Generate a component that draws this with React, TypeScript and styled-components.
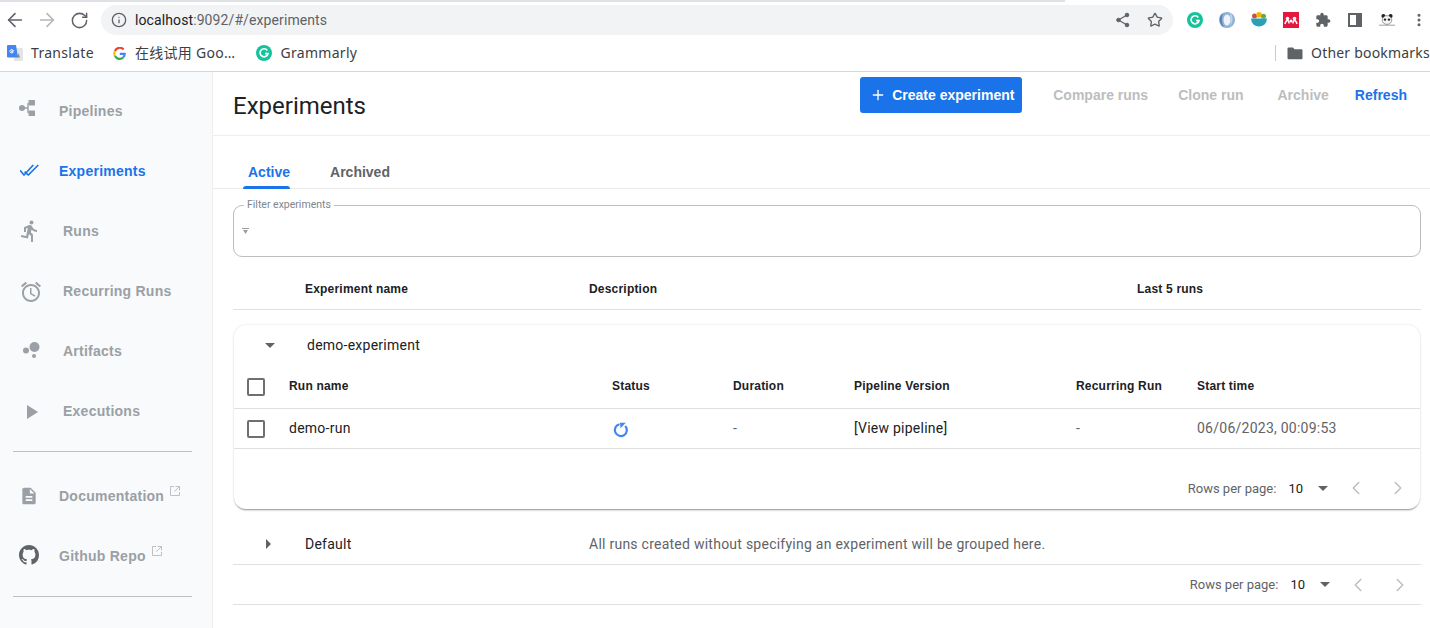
import React from "react";
import styled, { createGlobalStyle } from "styled-components";
import {
  ArrowLeft,
  ArrowRight,
  RotateCw,
  Info,
  Star,
  MoreVertical,
  Plus,
  ChevronLeft,
  ChevronRight,
} from "lucide-react";

const BLUE = "#1a73e8";
const LINE = "#e0e0e0";
const BOLD_FONT = `"Liberation Sans", Arial, sans-serif`;

const GlobalStyle = createGlobalStyle`
  html, body {
    margin: 0;
    padding: 0;
    background: #fff;
    overflow: hidden;
  }
  * { box-sizing: border-box; }
  #root {
    width: 1430px;
    height: 628px;
    font-family: Roboto, "Noto Sans CJK SC", sans-serif;
  }
`;

const Page = styled.div`
  display: flex;
  flex-direction: column;
  width: 1430px;
  height: 628px;
  overflow: hidden;
`;

/* browser chrome */
const Chrome = styled.div`
  height: 72px;
  flex: none;
  background: #fff;
  border-bottom: 1px solid #d6d6d6;
  color: #5f6368;
`;

const TabEdge = styled.div`
  width: 1065px;
  height: 2px;
  background: #dee1e6;
`;

const ToolRow = styled.div`
  display: flex;
  align-items: center;
  height: 36px;
  padding-left: 4px;
`;

const NavIcon = styled.span<{ $dim?: boolean }>`
  display: flex;
  align-items: center;
  justify-content: center;
  width: 22px;
  margin-right: 10px;
  color: ${({ $dim }) => ($dim ? "#b4b6b9" : "#5f6368")};
`;

const Omnibox = styled.div`
  display: flex;
  align-items: center;
  width: 1072px;
  height: 30px;
  margin-left: 1px;
  padding: 0 10px;
  border-radius: 15px;
  background: #f1f3f4;
  font-size: 14px;
  letter-spacing: 0.1px;
  color: #5f6368;
`;

const Url = styled.span`
  margin-left: 8px;
  flex: 1;
  strong {
    font-weight: 400;
    color: #202124;
  }
`;

const OmniAction = styled.span`
  display: flex;
  margin-left: 16px;
  color: #5f6368;
`;

const Extensions = styled.div`
  display: flex;
  align-items: center;
  gap: 16px;
  margin-left: 14px;
`;

const ExtSlot = styled.span`
  display: flex;
  justify-content: center;
  width: 16px;
  height: 16px;
  color: #5f6368;
`;

const BookmarkRow = styled.div`
  display: flex;
  align-items: center;
  height: 30px;
  padding-left: 7px;
  font-family: "Noto Sans", "Noto Sans CJK SC", sans-serif;
  font-size: 14px;
  letter-spacing: 0.3px;
  color: #3c4043;
`;

const Bookmark = styled.span<{ $after: number }>`
  display: flex;
  align-items: center;
  gap: 8px;
  margin-right: ${({ $after }) => $after}px;
  white-space: nowrap;
`;

const BookmarkLabel = styled.span`
  margin-bottom: 2px;
`;

const BookmarkEnd = styled.div`
  display: flex;
  align-items: center;
  margin-left: auto;
  height: 16px;
  padding-left: 11px;
  border-left: 1px solid #c8cacc;
  gap: 8px;
  letter-spacing: 0.2px;
  white-space: nowrap;
  width: 155px;
`;

/* app shell */
const Shell = styled.div`
  flex: 1;
  display: flex;
  min-height: 0;
`;

const Sidebar = styled.nav`
  flex: none;
  width: 213px;
  padding-top: 9px;
  background: #f8fafb;
  border-right: 1px solid #eceef0;
`;

const NavItem = styled.div<{ $active?: boolean }>`
  display: flex;
  align-items: center;
  height: 60px;
  font-family: ${BOLD_FONT};
  font-size: 14px;
  font-weight: 700;
  letter-spacing: 0.25px;
  color: ${({ $active }) => ($active ? BLUE : "#9aa0a6")};
  padding-left: 18px;
`;

const NavGlyph = styled.span<{ $wide?: boolean; $left?: number; $shift?: number }>`
  display: flex;
  flex: none;
  width: ${({ $wide }) => ($wide ? 45 : 41)}px;
  padding-left: ${({ $left }) => $left ?? 0}px;
  margin-top: ${({ $shift }) => $shift ?? 0}px;
`;

const ExternalMark = styled.svg`
  align-self: flex-start;
  margin: 20px 0 0 6px;
`;

const SideRule = styled.hr<{ $after?: number }>`
  border: 0;
  height: 1px;
  background: #bdc1c6;
  margin: 10px 20px ${({ $after }) => $after ?? 0}px 13px;
`;

const Main = styled.main`
  flex: 1;
  min-width: 0;
`;

const TitleBar = styled.header`
  display: flex;
  height: 64px;
  padding: 5px 0 0 20px;
  border-bottom: 1px solid #eeeeee;
`;

const Title = styled.h1`
  margin: 15px 0 0;
  font-size: 24px;
  line-height: 28px;
  font-weight: 400;
  color: #202124;
`;

const Actions = styled.div`
  display: flex;
  align-items: center;
  height: 36px;
  margin-left: auto;
  padding-right: 23px;
  font-family: ${BOLD_FONT};
  font-size: 14px;
  font-weight: 700;
`;

const PrimaryButton = styled.button`
  display: flex;
  align-items: center;
  gap: 6px;
  height: 36px;
  width: 162px;
  padding: 0 0 0 10px;
  border: 0;
  border-radius: 3px;
  background: ${BLUE};
  color: #fff;
  font: inherit;
  white-space: nowrap;
  margin-right: 31px;
`;

const TextAction = styled.span<{ $enabled?: boolean; $gap: number }>`
  color: ${({ $enabled }) => ($enabled ? BLUE : "#bdbdbd")};
  margin-right: ${({ $gap }) => $gap}px;
`;

const TabBar = styled.div`
  display: flex;
  height: 53px;
  padding-left: 30px;
  gap: 35px;
  border-bottom: 1px solid #eaeaea;
`;

const Tab = styled.div<{ $active?: boolean }>`
  position: relative;
  display: flex;
  align-items: flex-end;
  height: 53px;
  padding: 0 0 7px 5px;
  font-family: ${BOLD_FONT};
  font-size: 14px;
  font-weight: 700;
  line-height: 20px;
  color: ${({ $active }) => ($active ? BLUE : "#5f6368")};
  &::after {
    content: "";
    display: ${({ $active }) => ($active ? "block" : "none")};
    position: absolute;
    left: 0;
    right: 0;
    bottom: 0;
    height: 3px;
    border-radius: 3px 3px 0 0;
    background: ${BLUE};
  }
`;

const Content = styled.div`
  padding: 0 9px 0 20px;
`;

const FilterBox = styled.fieldset`
  display: flex;
  align-items: center;
  height: 58px;
  margin: 10px 0 0;
  padding: 0 0 5px 8px;
  border: 1px solid #bdbdbd;
  border-radius: 9px;
  legend {
    margin-left: 2px;
    padding: 0 3px;
    font-size: 10.5px;
    line-height: 12px;
    color: #80868b;
  }
`;

const GridRow = styled.div<{ $height: number; $border?: boolean }>`
  display: grid;
  align-items: center;
  height: ${({ $height }) => $height}px;
  ${({ $border }) => ($border ? `border-bottom: 1px solid ${LINE};` : "")}
`;

const ExperimentHead = styled(GridRow)`
  grid-template-columns: 72px 284px 548px 1fr;
  margin-top: 9px;
  padding-top: 2px;
  font-family: ${BOLD_FONT};
  font-size: 12px;
  font-weight: 700;
  letter-spacing: 0.2px;
  color: #202124;
`;

const Card = styled.section`
  margin: 15px 1px 0;
  height: 184px;
  border-radius: 12px;
  background: #fff;
  box-shadow: 0 2px 2px -1px rgba(60, 64, 67, 0.55), 0 0 2px rgba(60, 64, 67, 0.2);
`;

const CardTitle = styled.div`
  display: flex;
  align-items: center;
  height: 40px;
  padding-left: 31px;
  font-size: 14px;
  letter-spacing: 0.25px;
  color: #202124;
`;

const Caret = styled.svg`
  flex: none;
`;

const CardTitleText = styled.span`
  margin-left: 32px;
`;

const runColumns = "55px 323px 121px 121px 222px 121px 1fr";

const RunHead = styled(GridRow)`
  grid-template-columns: ${runColumns};
  padding-bottom: 2px;
  font-family: ${BOLD_FONT};
  font-size: 12px;
  font-weight: 700;
  letter-spacing: 0.2px;
  color: #202124;
`;

const RunRow = styled(GridRow)`
  grid-template-columns: ${runColumns};
  padding-bottom: 2px;
  font-size: 14px;
  letter-spacing: 0.25px;
  color: #3c4043;
`;

const CheckCell = styled.span`
  display: flex;
  justify-content: flex-start;
  padding: 2px 0 0 13px;
`;

const CheckBox = styled.span`
  display: block;
  width: 18px;
  height: 18px;
  border: 2px solid #6f6f6f;
  border-radius: 2px;
`;

const StatusCell = styled.span`
  display: flex;
  padding: 4px 0 0 1px;
`;

const Dark = styled.span`
  color: #202124;
`;

const Muted = styled.span`
  color: #5f6368;
`;

const Pager = styled.div<{ $height: number; $right: number; $drop: number }>`
  display: flex;
  align-items: center;
  justify-content: flex-end;
  height: ${({ $height }) => $height}px;
  padding: ${({ $drop }) => $drop}px ${({ $right }) => $right}px 0 0;
  font-size: 13px;
  color: #5f6368;
`;

const PageSize = styled.span`
  margin: 0 15px 0 12px;
  color: #202124;
`;

const PagerArrows = styled.span`
  display: flex;
  gap: 20px;
  margin-left: 17px;
  margin-right: -1px;
  color: #bdbdbd;
`;

const DefaultRow = styled(GridRow)`
  grid-template-columns: 72px 284px 1fr;
  margin-top: 16px;
  padding-bottom: 2px;
  font-size: 14px;
  letter-spacing: 0.25px;
  color: #202124;
`;

const CaretCell = styled.span`
  display: flex;
  padding-left: 33px;
`;

const BottomRule = styled.div`
  border-bottom: 1px solid ${LINE};
`;

const runs = [
  { name: "demo-run", duration: "-", pipeline: "[View pipeline]", recurring: "-", start: "06/06/2023, 00:09:53" },
];

const DownCaret = () => (
  <Caret width="10" height="5" viewBox="0 0 10 5">
    <path d="M0 0h10L5 5z" fill="#5f6368" />
  </Caret>
);

const TablePager = ({ height, right, drop }: { height: number; right: number; drop: number }) => (
  <Pager $height={height} $right={right} $drop={drop}>
    Rows per page:
    <PageSize>10</PageSize>
    <DownCaret />
    <PagerArrows>
      <ChevronLeft size={22} strokeWidth={1.6} />
      <ChevronRight size={22} strokeWidth={1.6} />
    </PagerArrows>
  </Pager>
);

const PipelineIcon = () => (
  <svg width="16" height="16" viewBox="0 0 16 16" fill="#9aa0a6">
    <circle cx="3" cy="8" r="3" />
    <path d="M5 7.300h3.300V3h1.400v10H8.300V8.700H5z" />
    <rect x="9.500" y="0" width="6.500" height="5.500" rx=".6" />
    <rect x="9.500" y="10.500" width="6.500" height="5.500" rx=".6" />
  </svg>
);

const CheckAllIcon = () => (
  <svg width="19" height="12" viewBox="0 0 19 12" fill="none" stroke={BLUE} strokeWidth="1.600">
    <path d="M0 6.300L4 11 13.300 1M4.600 7.600L8.300 11 18.300 1" />
  </svg>
);

const RunnerIcon = () => (
  <svg width="24" height="24" viewBox="0 0 24 24" fill="#9aa0a6">
    <path d="M13.49 5.480c1.100 0 2-.9 2-2s-.9-2-2-2-2 .9-2 2 .9 2 2 2zm-3.600 13.900l1-4.400 2.100 2v6h2v-7.500l-2.100-2 .6-3c1.300 1.500 3.300 2.500 5.500 2.500v-2c-1.900 0-3.500-1-4.300-2.400l-1-1.600c-.4-.6-1-1-1.700-1-.3 0-.5.100-.8.100l-5.200 2.200v4.700h2v-3.400l1.800-.7-1.600 8.100-4.900-1-.4 2 7 1.400z" />
  </svg>
);

const AlarmIcon = () => (
  <svg width="24" height="24" viewBox="0 0 24 24" fill="#9aa0a6">
    <path d="M22 5.720l-4.600-3.860-1.290 1.530 4.600 3.860L22 5.720zM7.880 3.390L6.600 1.860 2 5.710l1.290 1.530 4.590-3.850zM12.500 8H11v6l4.750 2.850.75-1.230-4-2.370V8zM12 4c-4.970 0-9 4.030-9 9s4.030 9 9 9 9-4.030 9-9-4.030-9-9-9zm0 16c-3.870 0-7-3.130-7-7s3.130-7 7-7 7 3.130 7 7-3.130 7-7 7z" />
  </svg>
);

const BubblesIcon = () => (
  <svg width="18" height="18" viewBox="0 0 18 18" fill="#9aa0a6">
    <circle cx="12.500" cy="6" r="5" />
    <circle cx="4" cy="9.500" r="3" />
    <circle cx="12" cy="15" r="2" />
  </svg>
);

const PlayIcon = () => (
  <svg width="11" height="14" viewBox="0 0 11 14" fill="#9aa0a6">
    <path d="M0 0l11 7-11 7z" />
  </svg>
);

const DocIcon = () => (
  <svg width="20" height="20" viewBox="0 0 24 24" fill="#9aa0a6">
    <path d="M14 2H6c-1.100 0-2 .9-2 2v16c0 1.100.9 2 2 2h12c1.100 0 2-.9 2-2V8l-6-6zm2 16H8v-2h8v2zm0-4H8v-2h8v2zm-3-5V3.500L18.500 9H13z" />
  </svg>
);

const GithubIcon = () => (
  <svg width="20" height="20" viewBox="0 0 16 16" fill="#5f6368">
    <path d="M8 0C3.580 0 0 3.580 0 8c0 3.540 2.290 6.530 5.470 7.590.4.070.55-.17.55-.38 0-.19-.01-.82-.01-1.490-2.010.37-2.530-.49-2.690-.94-.09-.23-.48-.94-.82-1.130-.28-.15-.68-.52-.01-.53.630-.01 1.080.58 1.230.82.720 1.210 1.870.87 2.330.66.070-.52.280-.87.510-1.070-1.780-.2-3.640-.89-3.640-3.950 0-.87.310-1.590.820-2.150-.08-.2-.36-1.020.08-2.120 0 0 .67-.21 2.200.82.640-.18 1.320-.27 2-.27s1.360.09 2 .27c1.530-1.040 2.200-.82 2.200-.82.440 1.100.160 1.920.080 2.120.51.560.82 1.270.82 2.150 0 3.070-1.870 3.750-3.650 3.950.29.250.54.730.54 1.480 0 1.070-.01 1.930-.01 2.200 0 .21.150.46.55.38A8.010 8.010 0 0016 8c0-4.420-3.580-8-8-8z" />
  </svg>
);

const External = () => (
  <ExternalMark width="10" height="10" viewBox="0 0 10 10" fill="none" stroke="#bdc1c6" strokeWidth="1">
    <path d="M4 .5H.5v9h9V6M5.500.5h4v4M9.500.5L4.500 5.500" />
  </ExternalMark>
);

const RunningIcon = () => (
  <svg width="16" height="16" viewBox="0 0 16 16" fill="none">
    <path d="M12.200 3.900A6 6 0 1 1 6.500 2.200" stroke="#4285f4" strokeWidth="2.200" />
    <path d="M7 .8h5.800L7.500 6.200z" fill="#4285f4" />
  </svg>
);

const ShareIcon = () => (
  <svg width="16" height="16" viewBox="0 0 16 16" fill="#5f6368" stroke="#5f6368">
    <circle cx="12" cy="3" r="1.800" />
    <circle cx="12" cy="13" r="1.800" />
    <circle cx="3.500" cy="8" r="1.800" />
    <path d="M12 3L3.500 8l8.500 5" fill="none" strokeWidth="1.200" />
  </svg>
);

const GrammarlyIcon = () => (
  <svg width="16" height="16" viewBox="0 0 16 16">
    <circle cx="8" cy="8" r="8" fill="#15c39a" />
    <path d="M11.300 5.400A4 4 0 1 0 12 8.500H9" fill="none" stroke="#fff" strokeWidth="1.700" />
  </svg>
);

const GoogleIcon = () => (
  <svg width="14" height="13" viewBox="0 0 14 13" fill="none" strokeWidth="2.200">
    <path d="M10.600 2.400A5.200 5.200 0 0 0 2 4" stroke="#ea4335" />
    <path d="M2 4a5.200 5.200 0 0 0 0 5" stroke="#fbbc05" />
    <path d="M2 9a5.200 5.200 0 0 0 8.200 1.500" stroke="#34a853" />
    <path d="M10.200 10.500c1-.9 1.500-2.200 1.500-3.700H6.800" stroke="#4285f4" />
  </svg>
);

const TranslateIcon = () => (
  <svg width="16" height="16" viewBox="0 0 16 16">
    <path d="M7 3h8a1 1 0 0 1 1 1v11a1 1 0 0 1-1 1H7z" fill="#e3e4e6" />
    <path d="M11.500 8l1.500 4.500h-3z" fill="#8c8f94" />
    <path d="M1 0h8l2 12.500H1a1 1 0 0 1-1-1V1a1 1 0 0 1 1-1z" fill="#4285f4" />
    <path d="M7.200 5.800H4.800v1.200h1.400a1.700 1.700 0 1 1-.4-2" fill="none" stroke="#fff" strokeWidth="1" />
  </svg>
);

const BlueRingIcon = () => (
  <svg width="16" height="16" viewBox="0 0 16 16">
    <circle cx="8" cy="8" r="8" fill="#8fb0d9" />
    <path d="M4 1c-3 2-4 5-3 9s3 5 4 5c-2-3-2-5-2-8s.5-4 1-6z" fill="#5d83b5" />
    <ellipse cx="8" cy="8" rx="3.500" ry="5.500" fill="#eef3f9" />
    <path d="M10 0c3 2 4 5 3.500 8S12 13 10 16c2-3 1.500-5 1.500-8S11 2 10 0z" fill="#c2d3e8" />
  </svg>
);

const BowlIcon = () => (
  <svg width="16" height="16" viewBox="0 0 16 16">
    <circle cx="3.500" cy="4" r="2.500" fill="#c9504a" />
    <circle cx="8" cy="2.800" r="2.800" fill="#f4b400" />
    <circle cx="12.500" cy="4.200" r="2.500" fill="#6aa84f" />
    <path d="M0 6.500h16a8 8 0 0 1-16 0z" fill="#2a9fb5" />
  </svg>
);

const MendeleyIcon = () => (
  <svg width="16" height="16" viewBox="0 0 16 16">
    <rect width="16" height="16" fill="#e5173f" />
    <circle cx="4.500" cy="6.500" r="1.800" fill="#fff" />
    <circle cx="11.500" cy="6.500" r="1.800" fill="#fff" />
    <circle cx="8" cy="9" r="1.500" fill="#fff" />
    <path d="M2 12c.5-2 1.200-3.500 2.500-3.500S6 10 6 11.500M10 11.500c0-1.500.2-3 1.500-3S13.500 10 14 12" fill="none" stroke="#fff" strokeWidth="1.500" />
  </svg>
);

const ExtensionIcon = () => (
  <svg width="16" height="16" viewBox="0 0 24 24" fill="#5f6368">
    <path d="M20.500 11H19V7c0-1.100-.9-2-2-2h-4V3.500C13 2.120 11.880 1 10.500 1S8 2.120 8 3.500V5H4c-1.100 0-1.990.9-1.990 2v3.800H3.500c1.490 0 2.700 1.210 2.700 2.700s-1.210 2.700-2.700 2.700H2V20c0 1.100.9 2 2 2h3.800v-1.500c0-1.490 1.210-2.700 2.700-2.700 1.490 0 2.700 1.210 2.700 2.700V22H17c1.100 0 2-.9 2-2v-4h1.500c1.380 0 2.500-1.120 2.500-2.500S21.880 11 20.500 11z" />
  </svg>
);

const SidePanelIcon = () => (
  <svg width="16" height="16" viewBox="0 0 16 16">
    <path d="M2 2h12v12H2z" fill="none" stroke="#5f6368" strokeWidth="2" />
    <rect x="9" y="1" width="6" height="14" fill="#5f6368" />
  </svg>
);

const PandaIcon = () => (
  <svg width="20" height="16" viewBox="0 0 20 16">
    <circle cx="5.500" cy="3" r="2.500" fill="#222" />
    <circle cx="14.500" cy="3" r="2.500" fill="#222" />
    <ellipse cx="10" cy="8" rx="6" ry="5.500" fill="#f4f4f4" stroke="#222" strokeWidth=".5" />
    <circle cx="7.500" cy="7.500" r="1.500" fill="#222" />
    <circle cx="12.500" cy="7.500" r="1.500" fill="#222" />
    <path d="M0 14.500h20" stroke="#555" strokeWidth=".7" />
  </svg>
);

const FolderIcon = () => (
  <svg width="16" height="16" viewBox="0 0 16 16" fill="#5f6368">
    <path d="M1.500 2.500h4.500l1.500 1.700h7a1 1 0 0 1 1 1v8a1 1 0 0 1-1 1h-13a1 1 0 0 1-1-1v-9.700a1 1 0 0 1 1-1z" />
  </svg>
);

const FilterIcon = () => (
  <svg width="8" height="6" viewBox="0 0 8 6" fill="#9e9e9e">
    <path d="M0 0h7v1H0zM1 2h5L3.500 6z" />
  </svg>
);

const App = () => (
  <Page>
    <GlobalStyle />
    <Chrome>
      <TabEdge />
      <ToolRow>
        <NavIcon><ArrowLeft size={22} strokeWidth={1.7} /></NavIcon>
        <NavIcon $dim><ArrowRight size={22} strokeWidth={1.7} /></NavIcon>
        <NavIcon><RotateCw size={19} strokeWidth={1.9} /></NavIcon>
        <Omnibox>
          <Info size={16} />
          <Url>
            <strong>localhost</strong>:9092/#/experiments
          </Url>
          <OmniAction><ShareIcon /></OmniAction>
          <OmniAction><Star size={16} /></OmniAction>
        </Omnibox>
        <Extensions>
          <ExtSlot><GrammarlyIcon /></ExtSlot>
          <ExtSlot><BlueRingIcon /></ExtSlot>
          <ExtSlot><BowlIcon /></ExtSlot>
          <ExtSlot><MendeleyIcon /></ExtSlot>
          <ExtSlot><ExtensionIcon /></ExtSlot>
          <ExtSlot><SidePanelIcon /></ExtSlot>
          <ExtSlot><PandaIcon /></ExtSlot>
          <ExtSlot><MoreVertical size={16} strokeWidth={2.6} /></ExtSlot>
        </Extensions>
      </ToolRow>
      <BookmarkRow>
        <Bookmark $after={19}><TranslateIcon /><BookmarkLabel>Translate</BookmarkLabel></Bookmark>
        <Bookmark $after={21}><GoogleIcon /><BookmarkLabel>在线试用 Goo…</BookmarkLabel></Bookmark>
        <Bookmark $after={0}><GrammarlyIcon /><BookmarkLabel>Grammarly</BookmarkLabel></Bookmark>
        <BookmarkEnd><FolderIcon /><BookmarkLabel>Other bookmarks</BookmarkLabel></BookmarkEnd>
      </BookmarkRow>
    </Chrome>
    <Shell>
      <Sidebar>
        <NavItem><NavGlyph $left={1} $shift={-6}><PipelineIcon /></NavGlyph>Pipelines</NavItem>
        <NavItem $active><NavGlyph $left={2} $shift={-2}><CheckAllIcon /></NavGlyph>Experiments</NavItem>
        <NavItem><NavGlyph $wide><RunnerIcon /></NavGlyph>Runs</NavItem>
        <NavItem><NavGlyph $wide $left={1} $shift={2}><AlarmIcon /></NavGlyph>Recurring Runs</NavItem>
        <NavItem><NavGlyph $wide $left={4} $shift={-2}><BubblesIcon /></NavGlyph>Artifacts</NavItem>
        <NavItem><NavGlyph $wide $left={9} $shift={1}><PlayIcon /></NavGlyph>Executions</NavItem>
        <SideRule $after={14} />
        <NavItem><NavGlyph $left={1} $shift={-1}><DocIcon /></NavGlyph>Documentation<External /></NavItem>
        <NavItem><NavGlyph $left={1} $shift={-2}><GithubIcon /></NavGlyph>Github Repo<External /></NavItem>
        <SideRule />
      </Sidebar>
      <Main>
        <TitleBar>
          <Title>Experiments</Title>
          <Actions>
            <PrimaryButton><Plus size={16} strokeWidth={2} />Create experiment</PrimaryButton>
            <TextAction $gap={30}>Compare runs</TextAction>
            <TextAction $gap={34}>Clone run</TextAction>
            <TextAction $gap={26}>Archive</TextAction>
            <TextAction $enabled $gap={0}>Refresh</TextAction>
          </Actions>
        </TitleBar>
        <TabBar>
          <Tab $active>Active</Tab>
          <Tab>Archived</Tab>
        </TabBar>
        <Content>
          <FilterBox>
            <legend>Filter experiments</legend>
            <FilterIcon />
          </FilterBox>
          <ExperimentHead $height={44} $border>
            <span />
            <span>Experiment name</span>
            <span>Description</span>
            <span>Last 5 runs</span>
          </ExperimentHead>
          <Card>
            <CardTitle>
              <DownCaret />
              <CardTitleText>demo-experiment</CardTitleText>
            </CardTitle>
            <RunHead $height={44} $border>
              <CheckCell><CheckBox /></CheckCell>
              <span>Run name</span>
              <span>Status</span>
              <span>Duration</span>
              <span>Pipeline Version</span>
              <span>Recurring Run</span>
              <span>Start time</span>
            </RunHead>
            {runs.map((run) => (
              <RunRow key={run.name} $height={40} $border>
                <CheckCell><CheckBox /></CheckCell>
                <Dark>{run.name}</Dark>
                <StatusCell><RunningIcon /></StatusCell>
                <Muted>{run.duration}</Muted>
                <Dark>{run.pipeline}</Dark>
                <Muted>{run.recurring}</Muted>
                <Muted>{run.start}</Muted>
              </RunRow>
            ))}
            <TablePager height={60} right={12} drop={18} />
          </Card>
          <DefaultRow $height={40} $border>
            <CaretCell>
              <Caret width="5" height="10" viewBox="0 0 5 10">
                <path d="M0 0v10l5-5z" fill="#5f6368" />
              </Caret>
            </CaretCell>
            <span>Default</span>
            <Muted>All runs created without specifying an experiment will be grouped here.</Muted>
          </DefaultRow>
          <BottomRule>
            <TablePager height={39} right={11} drop={0} />
          </BottomRule>
        </Content>
      </Main>
    </Shell>
  </Page>
);

export default App;
